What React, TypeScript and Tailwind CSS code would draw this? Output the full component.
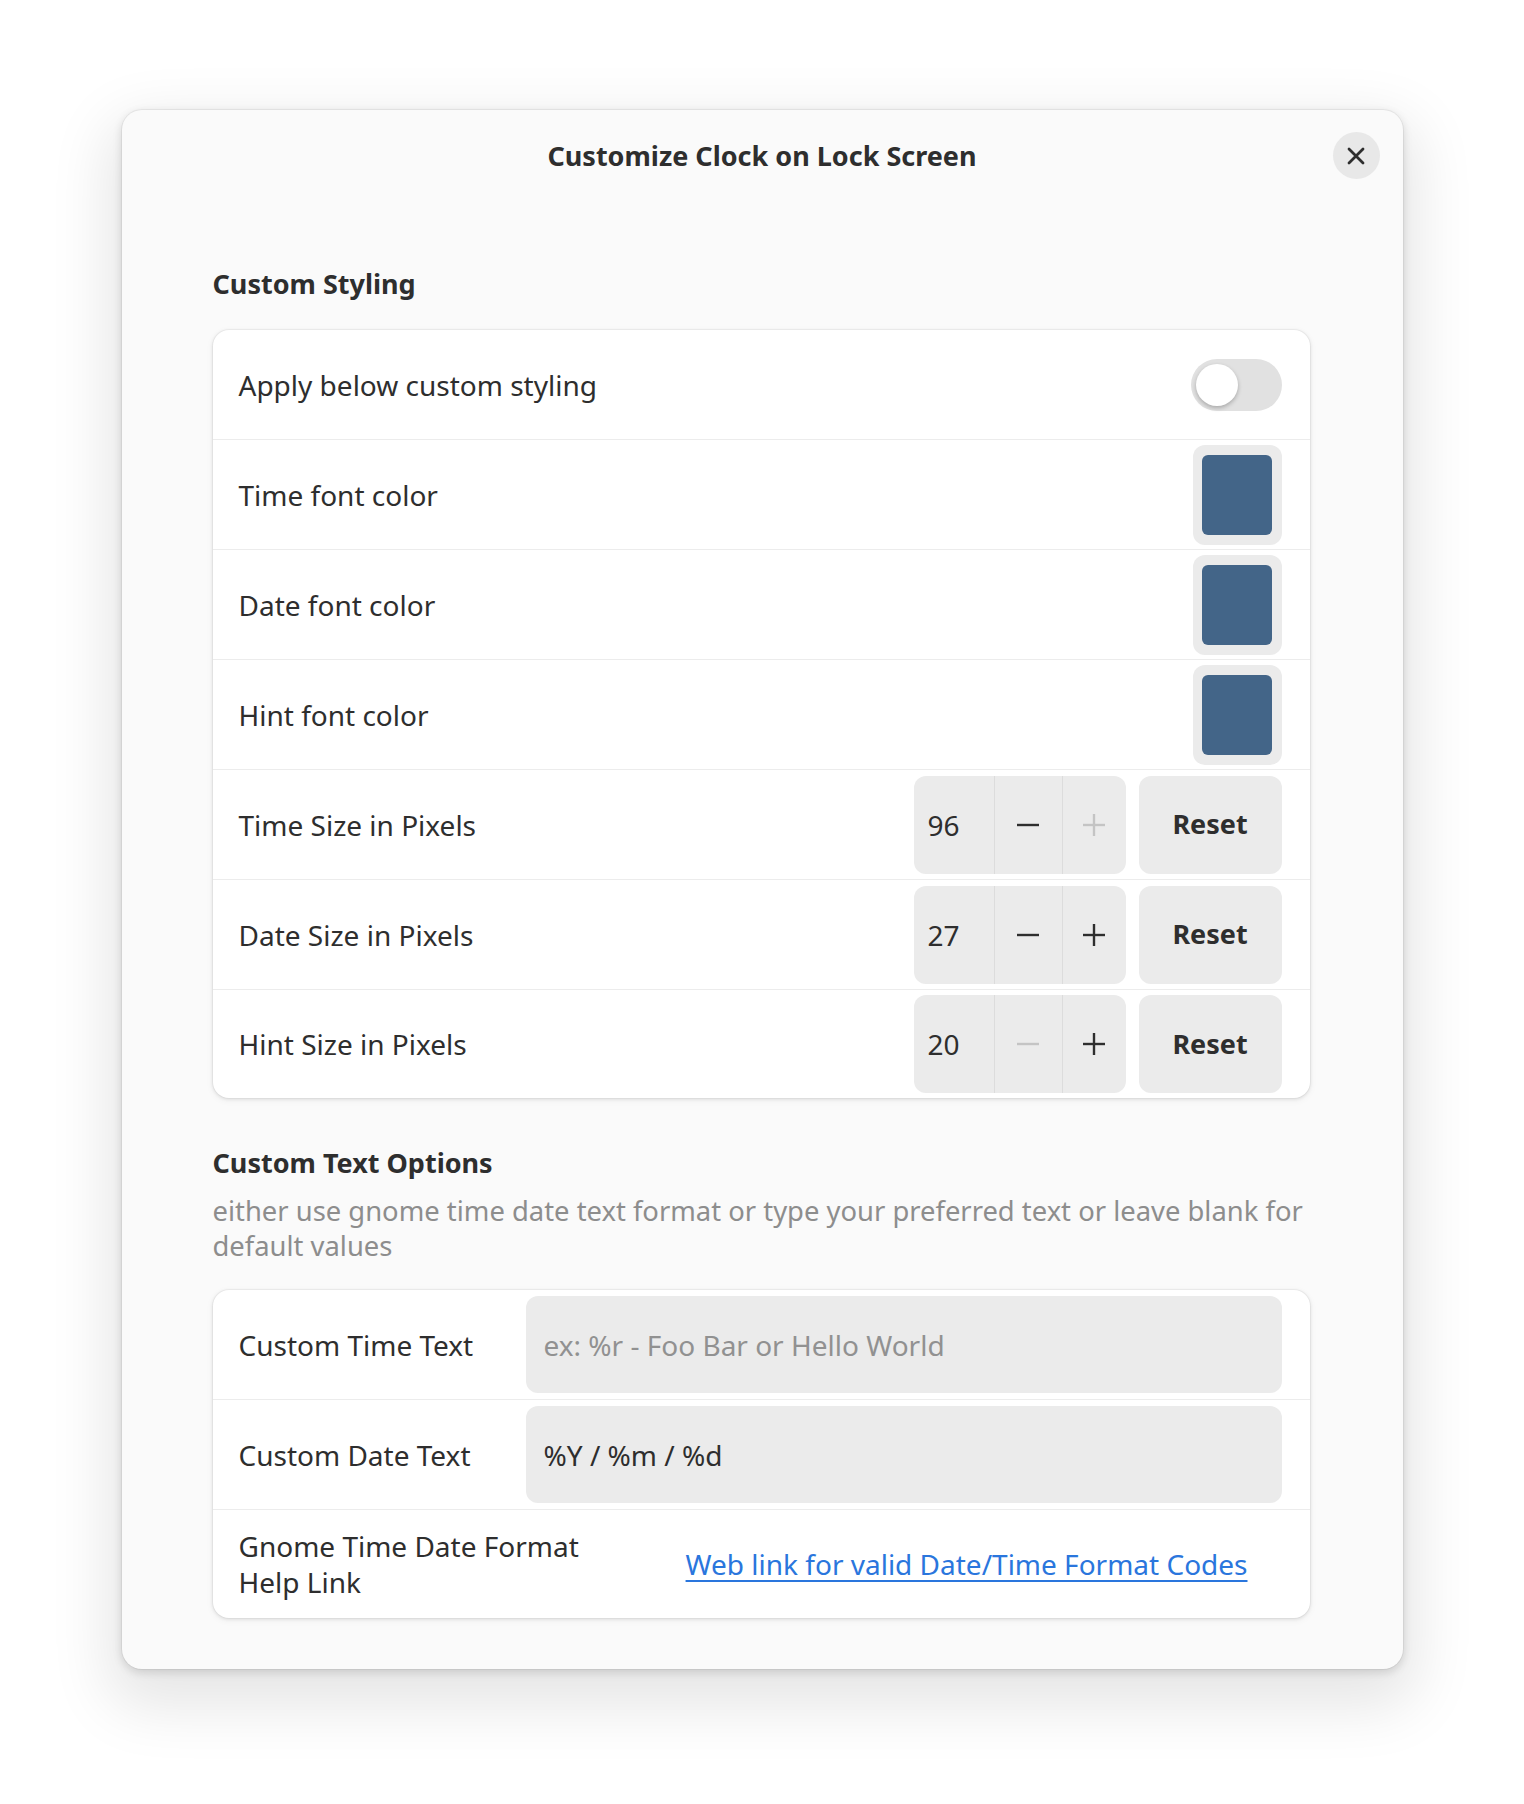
import React from "react";

const colorRows = ["Time font color", "Date font color", "Hint font color"];

const sizeRows = [
  { label: "Time Size in Pixels", value: 96, canMinus: true, canPlus: false },
  { label: "Date Size in Pixels", value: 27, canMinus: true, canPlus: true },
  { label: "Hint Size in Pixels", value: 20, canMinus: false, canPlus: true },
];

function MinusIcon({ enabled }: { enabled: boolean }) {
  return (
    <svg width="22" height="22" viewBox="0 0 22 22" fill="none">
      <line x1="0" y1="11" x2="22" y2="11" stroke={enabled ? "#2e2e2e" : "#c4c4c4"} strokeWidth="2.4" />
    </svg>
  );
}

function PlusIcon({ enabled }: { enabled: boolean }) {
  return (
    <svg width="22" height="22" viewBox="0 0 22 22" fill="none">
      <line x1="0" y1="11" x2="22" y2="11" stroke={enabled ? "#2e2e2e" : "#c4c4c4"} strokeWidth="2.4" />
      <line x1="11" y1="0" x2="11" y2="22" stroke={enabled ? "#2e2e2e" : "#c4c4c4"} strokeWidth="2.4" />
    </svg>
  );
}

function Row({ children }: { children: React.ReactNode }) {
  return (
    <div className="flex items-center h-[110px] pl-[26px] pr-[28px] border-b border-[#ececec] last:border-b-0 last:h-[108px]">
      {children}
    </div>
  );
}

export default function App() {
  return (
    <div className="min-h-[1804px] bg-white pt-[110px] font-['Noto_Sans',sans-serif] text-[#2e2e2e]">
      <div className="mx-auto w-[1281px] rounded-[20px] bg-[#fafafa] pb-[51px] shadow-[0_0_0_1px_rgba(0,0,0,0.05),0_3px_9px_1px_rgba(0,0,0,0.12),0_24px_60px_14px_rgba(0,0,0,0.1)]">
        {/* header */}
        <div className="flex items-center pt-[22px] pr-[23px] pl-[70px]">
          <h1 className="flex-1 text-center text-[27px] leading-[36px] font-bold">
            Customize Clock on Lock Screen
          </h1>
          <button className="flex h-[47px] w-[47px] items-center justify-center rounded-full bg-[#e8e8e8]">
            <svg width="18" height="18" viewBox="0 0 18 18" fill="none">
              <path d="M2 2L16 16M16 2L2 16" stroke="#2e2e2e" strokeWidth="2.8" strokeLinecap="round" />
            </svg>
          </button>
        </div>

        <div className="mx-auto w-[1097px] -translate-x-px">
          <h2 className="mt-[87px] text-[27px] leading-[36px] font-bold">Custom Styling</h2>

          <div className="mt-[28px] rounded-[16px] bg-white shadow-[0_0_0_1px_rgba(0,0,0,0.03),0_1px_3px_1px_rgba(0,0,0,0.07),0_2px_6px_2px_rgba(0,0,0,0.03)]">
            <Row>
              <span className="flex-1 text-[28px] leading-[36px]">Apply below custom styling</span>
              <div className="flex h-[52px] w-[91px] items-center rounded-full bg-[#e1e1e1] p-[5px]">
                <div className="h-[42px] w-[42px] rounded-full bg-white shadow-[0_2px_4px_rgba(0,0,0,0.25)]" />
              </div>
            </Row>

            {colorRows.map((label) => (
              <Row key={label}>
                <span className="flex-1 text-[28px] leading-[36px]">{label}</span>
                <button className="flex h-[100px] w-[89px] items-center justify-center rounded-[12px] bg-[#ebebeb]">
                  <div className="h-[80px] w-[70px] rounded-[6px] bg-[#436588]" />
                </button>
              </Row>
            ))}

            {sizeRows.map((r) => (
              <Row key={r.label}>
                <span className="flex-1 text-[28px] leading-[36px]">{r.label}</span>
                <div className="flex h-[98px] w-[212px] rounded-[12px] bg-[#ebebeb]">
                  <div className="flex w-[80px] items-center pl-[14px] text-[28px] leading-[36px]">{r.value}</div>
                  <div className="flex w-[68px] items-center justify-center border-l border-[#dcdcdc]">
                    <MinusIcon enabled={r.canMinus} />
                  </div>
                  <div className="flex w-[64px] items-center justify-center border-l border-[#dcdcdc]">
                    <PlusIcon enabled={r.canPlus} />
                  </div>
                </div>
                <button className="ml-[13px] flex h-[98px] w-[143px] items-center justify-center rounded-[12px] bg-[#ebebeb] text-[27px] font-bold">
                  Reset
                </button>
              </Row>
            ))}
          </div>

          <h2 className="mt-[47px] text-[27px] leading-[36px] font-bold">Custom Text Options</h2>
          <p className="mt-[12px] text-[27.4px] leading-[35px] text-[#8d8d8d]">
            <span className="block whitespace-nowrap">
              either use gnome time date text format or type your preferred text or leave blank for
            </span>
            <span className="block">default values</span>
          </p>

          <div className="mt-[27px] rounded-[16px] bg-white shadow-[0_0_0_1px_rgba(0,0,0,0.03),0_1px_3px_1px_rgba(0,0,0,0.07),0_2px_6px_2px_rgba(0,0,0,0.03)]">
            <Row>
              <span className="w-[287px] text-[28px] leading-[36px]">Custom Time Text</span>
              <input
                className="h-[97px] flex-1 rounded-[12px] bg-[#ebebeb] pl-[18px] text-[28px] outline-none placeholder:text-[#919191]"
                placeholder="ex: %r - Foo Bar or Hello World"
              />
            </Row>
            <Row>
              <span className="w-[287px] text-[28px] leading-[36px]">Custom Date Text</span>
              <input
                className="h-[97px] flex-1 rounded-[12px] bg-[#ebebeb] pl-[18px] text-[28px] text-[#2e2e2e] outline-none"
                defaultValue="%Y / %m / %d"
              />
            </Row>
            <Row>
              <span className="w-[370px] text-[28px] leading-[36px]">Gnome Time Date Format Help Link</span>
              <div className="flex flex-1 justify-end pr-[34px]">
                <a href="#" className="text-[28px] leading-[36px] text-[#2a76dd] underline underline-offset-[5px]">
                  Web link for valid Date/Time Format Codes
                </a>
              </div>
            </Row>
          </div>
        </div>
      </div>
    </div>
  );
}
